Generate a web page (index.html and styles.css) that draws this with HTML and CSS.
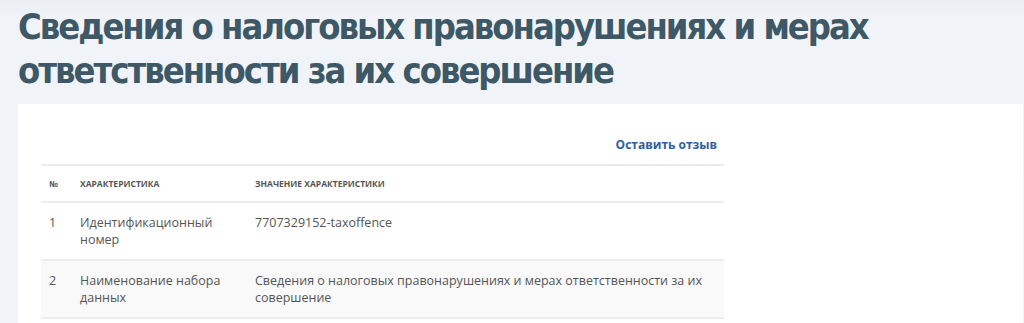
FILE: index.html
```html
<!DOCTYPE html>
<html lang="ru">
<head>
<meta charset="utf-8">
<title>Сведения о налоговых правонарушениях</title>
<link rel="stylesheet" href="styles.css">
</head>
<body>
<div class="page">
  <h1 class="title">Сведения о налоговых правонарушениях и мерах<br>ответственности за их совершение</h1>
  <div class="card">
    <div class="card-inner">
      <div class="toolbar"><a class="feedback" href="#">Оставить отзыв</a></div>
      <table class="passport">
        <thead>
          <tr>
            <th class="c-num">№</th>
            <th class="c-name">Характеристика</th>
            <th class="c-val">Значение характеристики</th>
          </tr>
        </thead>
        <tbody>
          <tr>
            <td>1</td>
            <td>Идентификационный номер</td>
            <td>7707329152-taxoffence</td>
          </tr>
          <tr class="alt">
            <td>2</td>
            <td>Наименование набора данных</td>
            <td>Сведения о налоговых правонарушениях и мерах ответственности за их совершение</td>
          </tr>
        </tbody>
      </table>
    </div>
  </div>
</div>
</body>
</html>
```

FILE: styles.css
```css
html, body {
  margin: 0;
  padding: 0;
}
body {
  background: linear-gradient(to bottom, #eceef2 0px, #f0f3f8 20px, #f1f4f9 100%);
  font-family: "Open Sans", "Liberation Sans", sans-serif;
  height: 323px;
  overflow: hidden;
}
.page {
  padding: 0 0 0 18px;
}
.title {
  margin: 0;
  padding: 5px 0 0 0;
  font-family: "DejaVu Sans Condensed", "DejaVu Sans", sans-serif;
  font-weight: bold;
  font-size: 36px;
  letter-spacing: -2px;
  line-height: 44px;
  color: #3e5866;
  height: 104px;
  box-sizing: border-box;
}
.card {
  background: #ffffff;
  margin-right: 1px;
  min-height: 230px;
}
.card-inner {
  padding: 0 0 0 23px;
  width: 683px;
}
.toolbar {
  display: flex;
  justify-content: flex-end;
  padding: 33px 7px 0 0;
  height: 60px;
  box-sizing: border-box;
}
.feedback {
  font-size: 12px;
  font-weight: bold;
  color: #2c61a6;
  text-decoration: none;
  line-height: 16px;
}
.passport {
  width: 683px;
  border-collapse: collapse;
  border-top: 2px solid #ededed;
  font-size: 12.5px;
  line-height: 17px;
  color: #555555;
}
.passport th {
  text-align: left;
  font-size: 8.5px;
  font-weight: bold;
  text-transform: uppercase;
  color: #555555;
  height: 35px;
  padding: 0 8px;
  border-bottom: 2px solid #ededed;
  vertical-align: middle;
}
.c-num { width: 15px; }
.c-name { width: 159px; }
.passport td {
  padding: 11px 8px 11px;
  vertical-align: top;
  border-bottom: 2px solid #ededed;
}
.passport tr.alt td {
  background: #f9f9f9;
}
```
